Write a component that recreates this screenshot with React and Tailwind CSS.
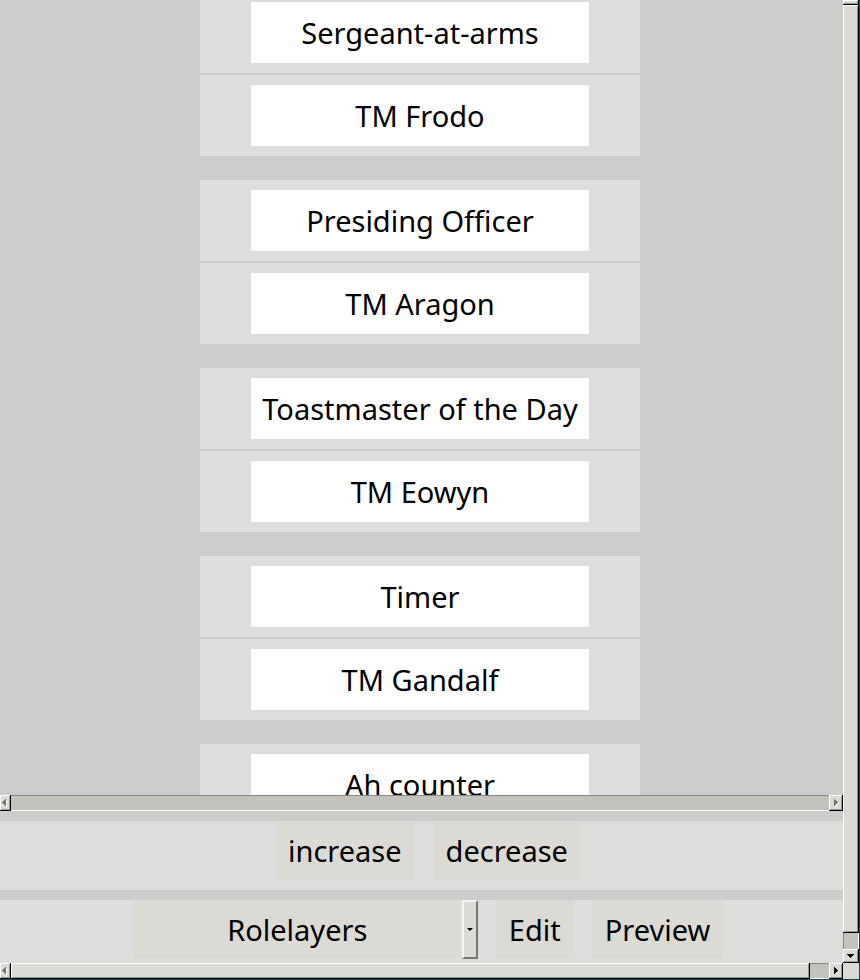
const roles = [
  { role: "Sergeant-at-arms", member: "TM Frodo" },
  { role: "Presiding Officer", member: "TM Aragon" },
  { role: "Toastmaster of the Day", member: "TM Eowyn" },
  { role: "Timer", member: "TM Gandalf" },
  { role: "Ah counter" },
];

const raised =
  "border-r border-b border-black bg-[#dcdad5] shadow-[inset_1px_1px_0_#fff,inset_-1px_-1px_0_#9b998f]";

function Arrow({ direction, disabled }) {
  const shapes = {
    left: "M5 1h1v7h-1v-1h-1v-1h-1v-1h-1v-1h1v-1h1v-1h1z",
    right: "M3 1h1v1h1v1h1v1h1v1h-1v1h-1v1h-1v1h-1z",
    down: "M1 3h7v1h-1v1h-1v1h-1v1h-1v-1h-1v-1h-1v-1h-1z",
  };
  return (
    <svg viewBox="0 0 9 9" className="size-[9px] shrink-0" aria-hidden="true">
      {disabled && <path d={shapes[direction]} fill="#fff" transform="translate(1 1)" />}
      <path d={shapes[direction]} fill={disabled ? "#73716c" : "#000"} />
    </svg>
  );
}

function ScrollButton({ direction, disabled, size }) {
  return (
    <button
      type="button"
      aria-label={"Scroll " + direction}
      disabled={disabled}
      className={"flex shrink-0 items-center overflow-hidden " + (direction === "left" ? "justify-start " : "justify-center ") + size + " " + raised}
    >
      {direction !== "up" && <Arrow direction={direction} disabled={disabled} />}
    </button>
  );
}

function RoleButton({ children }) {
  return (
    <div className="flex justify-center bg-[#dddddd] py-[10px]">
      <button type="button" className="h-[61px] w-[338px] bg-white pt-[1px] whitespace-nowrap">
        {children}
      </button>
    </div>
  );
}

function ToolButton({ children }) {
  return (
    <button type="button" className="h-[59px] bg-[#dbdad5] px-[13px]">
      {children}
    </button>
  );
}

export default function App() {
  return (
    <div className="flex h-screen border-r border-b border-[#0b4a66] bg-[#cccccc] font-['Noto_Sans',sans-serif] text-[29px] leading-[40px] text-black">
      <div className="flex min-w-0 flex-1 flex-col">
        <main className="min-h-0 flex-1 overflow-hidden pr-[3px]">
          <ul className="-mt-2 flex flex-col items-center gap-6">
            {roles.map(({ role, member }) => (
              <li key={role} className="flex w-[440px] flex-col gap-[2px]">
                <RoleButton>{role}</RoleButton>
                {member && <RoleButton>{member}</RoleButton>}
              </li>
            ))}
          </ul>
        </main>

        <div className="flex h-4 shrink-0">
          <ScrollButton direction="left" disabled size="w-[11px]" />
          <div className="flex-1 border-t border-b border-t-[#888680] border-b-white bg-[#c4c2bc]" />
          <ScrollButton direction="right" disabled size="w-[14px]" />
        </div>

        <div className="mt-[10px] flex h-[69px] shrink-0 items-start justify-center gap-[18px] bg-[#dddddd] pl-[13px]">
          <ToolButton>increase</ToolButton>
          <ToolButton>decrease</ToolButton>
        </div>

        <div className="mt-[10px] flex h-[63px] shrink-0 items-start justify-center gap-[18px] bg-[#dddddd] pl-[13px]">
          <div className="relative">
            <select
              aria-label="Layer"
              className="h-[59px] w-[345px] appearance-none bg-[#dbdad5] pr-4 text-center [text-align-last:center]"
            >
              <option>Rolelayers</option>
            </select>
            <span className="pointer-events-none absolute inset-y-0 right-0 flex w-4 items-center justify-center border-2 border-t-[#f6f6f4] border-r-[#777671] border-b-[#777671] border-l-[#f6f6f4] bg-[#dcdad5]">
              <svg viewBox="0 0 6 3" className="h-[3px] w-[6px]" aria-hidden="true">
                <path d="M0 0h6L3 3z" />
              </svg>
            </span>
          </div>
          <ToolButton>Edit</ToolButton>
          <ToolButton>Preview</ToolButton>
        </div>

        <div className="flex h-4 shrink-0">
          <ScrollButton direction="left" disabled size="w-[11px]" />
          <div className="flex flex-1 bg-[#c4c2bc] shadow-[inset_0_1px_0_#888680,inset_0_-1px_0_#fff]">
            <div className={"mr-[19px] flex-1 " + raised} />
          </div>
          <ScrollButton direction="right" size="w-[14px]" />
        </div>
      </div>

      <div className="flex w-4 shrink-0 flex-col bg-[#dcdad5]">
        <ScrollButton direction="up" size="h-[5px]" />
        <div className="mb-4 flex flex-1 flex-col bg-[#dcdad5]">
          <div className="flex flex-1 flex-col bg-[#c4c2bc] shadow-[inset_1px_0_0_#888680,inset_-1px_0_0_#fff]">
            <div className={"mb-4 flex-1 " + raised} />
          </div>
          <ScrollButton direction="down" size="h-[14px]" />
        </div>
      </div>
    </div>
  );
}
